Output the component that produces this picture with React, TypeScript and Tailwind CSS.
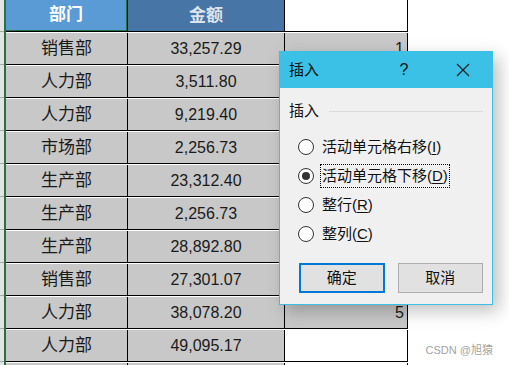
import React from "react";

interface Row {
  dept: string;
  amount: string;
  extra: string;
  whiteC?: boolean;
}

const rows: Row[] = [
  { dept: "销售部", amount: "33,257.29", extra: "1" },
  { dept: "人力部", amount: "3,511.80", extra: "" },
  { dept: "人力部", amount: "9,219.40", extra: "" },
  { dept: "市场部", amount: "2,256.73", extra: "" },
  { dept: "生产部", amount: "23,312.40", extra: "" },
  { dept: "生产部", amount: "2,256.73", extra: "" },
  { dept: "生产部", amount: "28,892.80", extra: "" },
  { dept: "销售部", amount: "27,301.07", extra: "" },
  { dept: "人力部", amount: "38,078.20", extra: "5" },
  { dept: "人力部", amount: "49,095.17", extra: "", whiteC: true },
  { dept: "", amount: "", extra: "", whiteC: true },
];

const options = [
  { label: "活动单元格右移", key: "I", checked: false },
  { label: "活动单元格下移", key: "D", checked: true },
  { label: "整行", key: "R", checked: false },
  { label: "整列", key: "C", checked: false },
];

const Strip = () => (
  <div className="flex w-[4px] flex-col">
    <div className="h-[31px] bg-[#e3e3e3]" />
    <div className="h-px bg-[#a8a8a8]" />
    <div className="h-px bg-[#e3e3e3]" />
  </div>
);

const Lines = () => (
  <>
    <div className="h-px w-[402px] bg-black" />
    <div className="h-px w-[402px] bg-white" />
  </>
);

const HeaderRow = () => (
  <div className="flex">
    <Strip />
    <div className="w-[2px] bg-[#217346]" />
    <div className="flex flex-col">
      <div className="flex h-[31px]">
        <div className="w-[122px] border-r border-black">
          <div className="flex h-full items-center justify-center border-r border-b border-[#217346] bg-[#5b9bd5] text-[17px] font-bold text-white">
            部门
          </div>
        </div>
        <div className="flex w-[157px] items-center justify-center border-r border-black bg-[#4775a6] text-[17px] font-bold text-[#dde3ec]">
          金额
        </div>
        <div className="w-[123px] border-r border-black bg-white" />
      </div>
      <Lines />
    </div>
  </div>
);

const DataRow = ({ row }: { row: Row }) => (
  <div className="flex">
    <Strip />
    <div className="w-[2px] bg-[#217346]" />
    <div className="flex flex-col">
      <div className="flex h-[31px] text-[#1a1a1a]">
        <div className="flex w-[122px] items-center justify-center border-r border-black bg-[#c8c8c8] text-[17px]">
          {row.dept}
        </div>
        <div className="flex w-[157px] items-center justify-center border-r border-black bg-[#c8c8c8] text-[16px]">
          {row.amount}
        </div>
        <div
          className={
            row.whiteC
              ? "flex w-[123px] items-center justify-end border-r border-black bg-white pr-[3px] text-[16px]"
              : "flex w-[123px] items-center justify-end border-r border-black bg-[#c8c8c8] pr-[3px] text-[16px]"
          }
        >
          {row.extra}
        </div>
      </div>
      <Lines />
    </div>
  </div>
);

const Radio = ({ checked }: { checked: boolean }) => (
  <div className="flex h-[16px] w-[16px] items-center justify-center rounded-full border border-[#333] bg-white">
    {checked && <div className="h-[8px] w-[8px] rounded-full bg-[#333]" />}
  </div>
);

const InsertDialog = () => (
  <div className="absolute left-[279px] top-[51px] flex h-[254px] w-[214px] flex-col border border-[#3bbfe4] bg-[#f0f0f0] text-[15px] text-[#111] shadow-[6px_6px_16px_rgba(0,0,0,0.25)]">
    <div className="flex h-[36px] items-center bg-[#3bc0e6] pl-[9px]">
      <span className="flex-1">插入</span>
      <span className="w-[20px] text-center text-[16px]">?</span>
      <div className="flex w-[78px] justify-center pl-[20px]">
        <svg width="14" height="14" viewBox="0 0 14 14">
          <path d="M1 1 L13 13 M13 1 L1 13" stroke="#222" strokeWidth="1.2" />
        </svg>
      </div>
    </div>
    <div className="flex flex-1 flex-col px-[9px] pt-[14px]">
      <div className="flex h-[18px] items-center gap-[10px]">
        <span>插入</span>
        <div className="h-px flex-1 bg-[#dcdcdc]" />
      </div>
      <div className="mt-[12px] flex flex-col pl-[9px]">
        {options.map((o) => (
          <div key={o.key} className="flex h-[29px] items-center gap-[6px]">
            <Radio checked={o.checked} />
            <span
              className={
                o.checked
                  ? "border border-dotted border-black px-[1px] leading-[22px]"
                  : "border border-transparent px-[1px] leading-[22px]"
              }
            >
              {o.label}(<span className="underline underline-offset-2">{o.key}</span>)
            </span>
          </div>
        ))}
      </div>
      <div className="mt-[15px] flex gap-[13px] pl-[10px]">
        <button className="flex h-[30px] w-[86px] items-center justify-center border-2 border-[#0078d7] bg-[#e1e1e1]">
          确定
        </button>
        <button className="flex h-[30px] w-[86px] items-center justify-center border border-[#adadad] bg-[#e1e1e1]">
          取消
        </button>
      </div>
    </div>
  </div>
);

export default function App() {
  return (
    <div className="relative h-[365px] w-[509px] overflow-hidden bg-white font-['Liberation_Sans','Noto_Sans_CJK_SC',sans-serif]">
      <div className="flex flex-col">
        <HeaderRow />
        {rows.map((r, i) => (
          <DataRow key={i} row={r} />
        ))}
      </div>
      <InsertDialog />
      <div className="absolute bottom-[7px] right-[16px] text-[11px] text-[#a3a3a3]">
        CSDN @旭猿
      </div>
    </div>
  );
}
